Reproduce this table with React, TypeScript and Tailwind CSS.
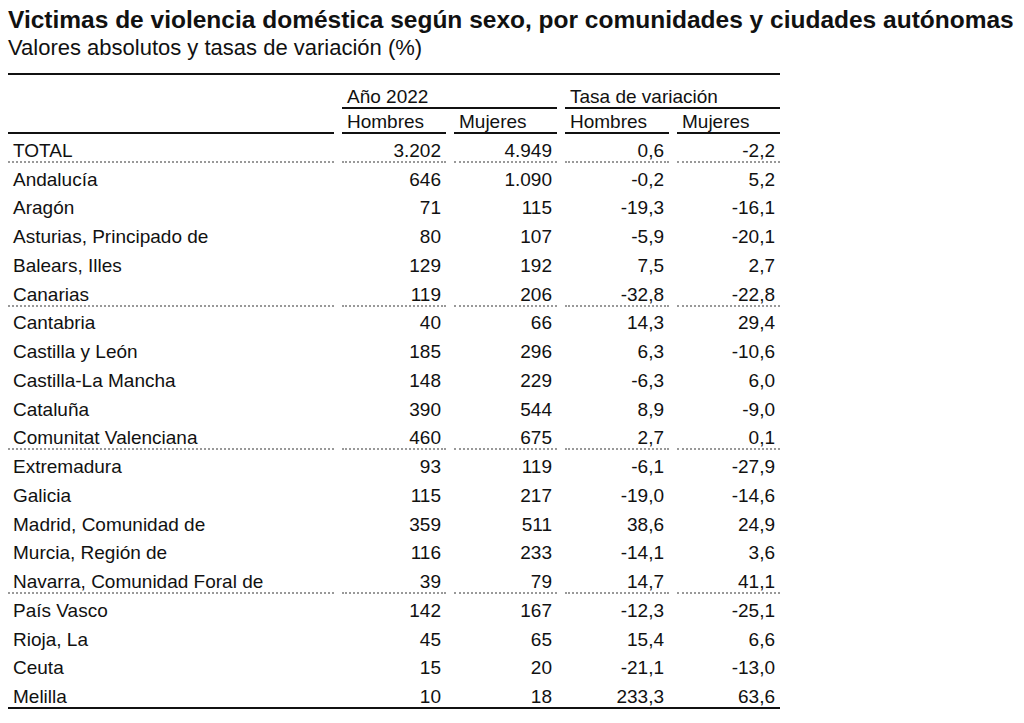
const rows: [string, string, string, string, string][] = [
  ['Andalucía', '646', '1.090', '-0,2', '5,2'],
  ['Aragón', '71', '115', '-19,3', '-16,1'],
  ['Asturias, Principado de', '80', '107', '-5,9', '-20,1'],
  ['Balears, Illes', '129', '192', '7,5', '2,7'],
  ['Canarias', '119', '206', '-32,8', '-22,8'],
  ['Cantabria', '40', '66', '14,3', '29,4'],
  ['Castilla y León', '185', '296', '6,3', '-10,6'],
  ['Castilla-La Mancha', '148', '229', '-6,3', '6,0'],
  ['Cataluña', '390', '544', '8,9', '-9,0'],
  ['Comunitat Valenciana', '460', '675', '2,7', '0,1'],
  ['Extremadura', '93', '119', '-6,1', '-27,9'],
  ['Galicia', '115', '217', '-19,0', '-14,6'],
  ['Madrid, Comunidad de', '359', '511', '38,6', '24,9'],
  ['Murcia, Región de', '116', '233', '-14,1', '3,6'],
  ['Navarra, Comunidad Foral de', '39', '79', '14,7', '41,1'],
  ['País Vasco', '142', '167', '-12,3', '-25,1'],
  ['Rioja, La', '45', '65', '15,4', '6,6'],
  ['Ceuta', '15', '20', '-21,1', '-13,0'],
  ['Melilla', '10', '18', '233,3', '63,6'],
];

function DataRow({ cells, dotted, last }: { cells: string[]; dotted: boolean; last?: boolean }) {
  const border = last
    ? 'h-[26.75px]'
    : dotted
      ? 'h-[28.75px] border-b-2 border-dotted border-[#999]'
      : 'h-[28.75px] border-b-2 border-transparent';
  return (
    <>
      {cells.map((c, i) => (
        <div
          key={i}
          className={`${border} flex items-end leading-[21px] ${i === 0 ? 'pl-[5px]' : 'justify-end pr-[5px]'}`}
        >
          {c}
        </div>
      ))}
    </>
  );
}

export default function App() {
  return (
    <div className="min-h-screen bg-white text-[#111] font-['Liberation_Sans',Arial,sans-serif]">
      <div className="pl-[8px]">
        <h1 className="pt-[5px] text-[24.5px] font-bold leading-[30px] whitespace-nowrap">
          Victimas de violencia doméstica según sexo, por comunidades y ciudades autónomas
        </h1>
        <p className="text-[22px] leading-[26px]">Valores absolutos y tasas de variación (%)</p>

        <div className="mt-[12px] w-[772px] border-t-2 border-b-2 border-[#111] text-[19px]">
          <div className="grid grid-cols-[326px_104px_103px_104px_103px] gap-x-2">
            {/* header */}
            <div className="h-[34px]" />
            <div className="col-span-2 h-[34px] flex items-end pl-[5px] leading-[21px] border-b-2 border-[#111]">
              Año 2022
            </div>
            <div className="col-span-2 h-[34px] flex items-end pl-[5px] leading-[21px] border-b-2 border-[#111]">
              Tasa de variación
            </div>
            <div className="h-[25px] border-b-2 border-[#111]" />
            {['Hombres', 'Mujeres', 'Hombres', 'Mujeres'].map((h, i) => (
              <div key={i} className="h-[25px] flex items-end pl-[5px] leading-[21px] border-b-2 border-[#111]">
                {h}
              </div>
            ))}

            <DataRow cells={['TOTAL', '3.202', '4.949', '0,6', '-2,2']} dotted />
            {rows.map((r, i) => (
              <DataRow key={r[0]} cells={r} dotted={i % 5 === 4} last={i === rows.length - 1} />
            ))}
          </div>
        </div>
      </div>
    </div>
  );
}
